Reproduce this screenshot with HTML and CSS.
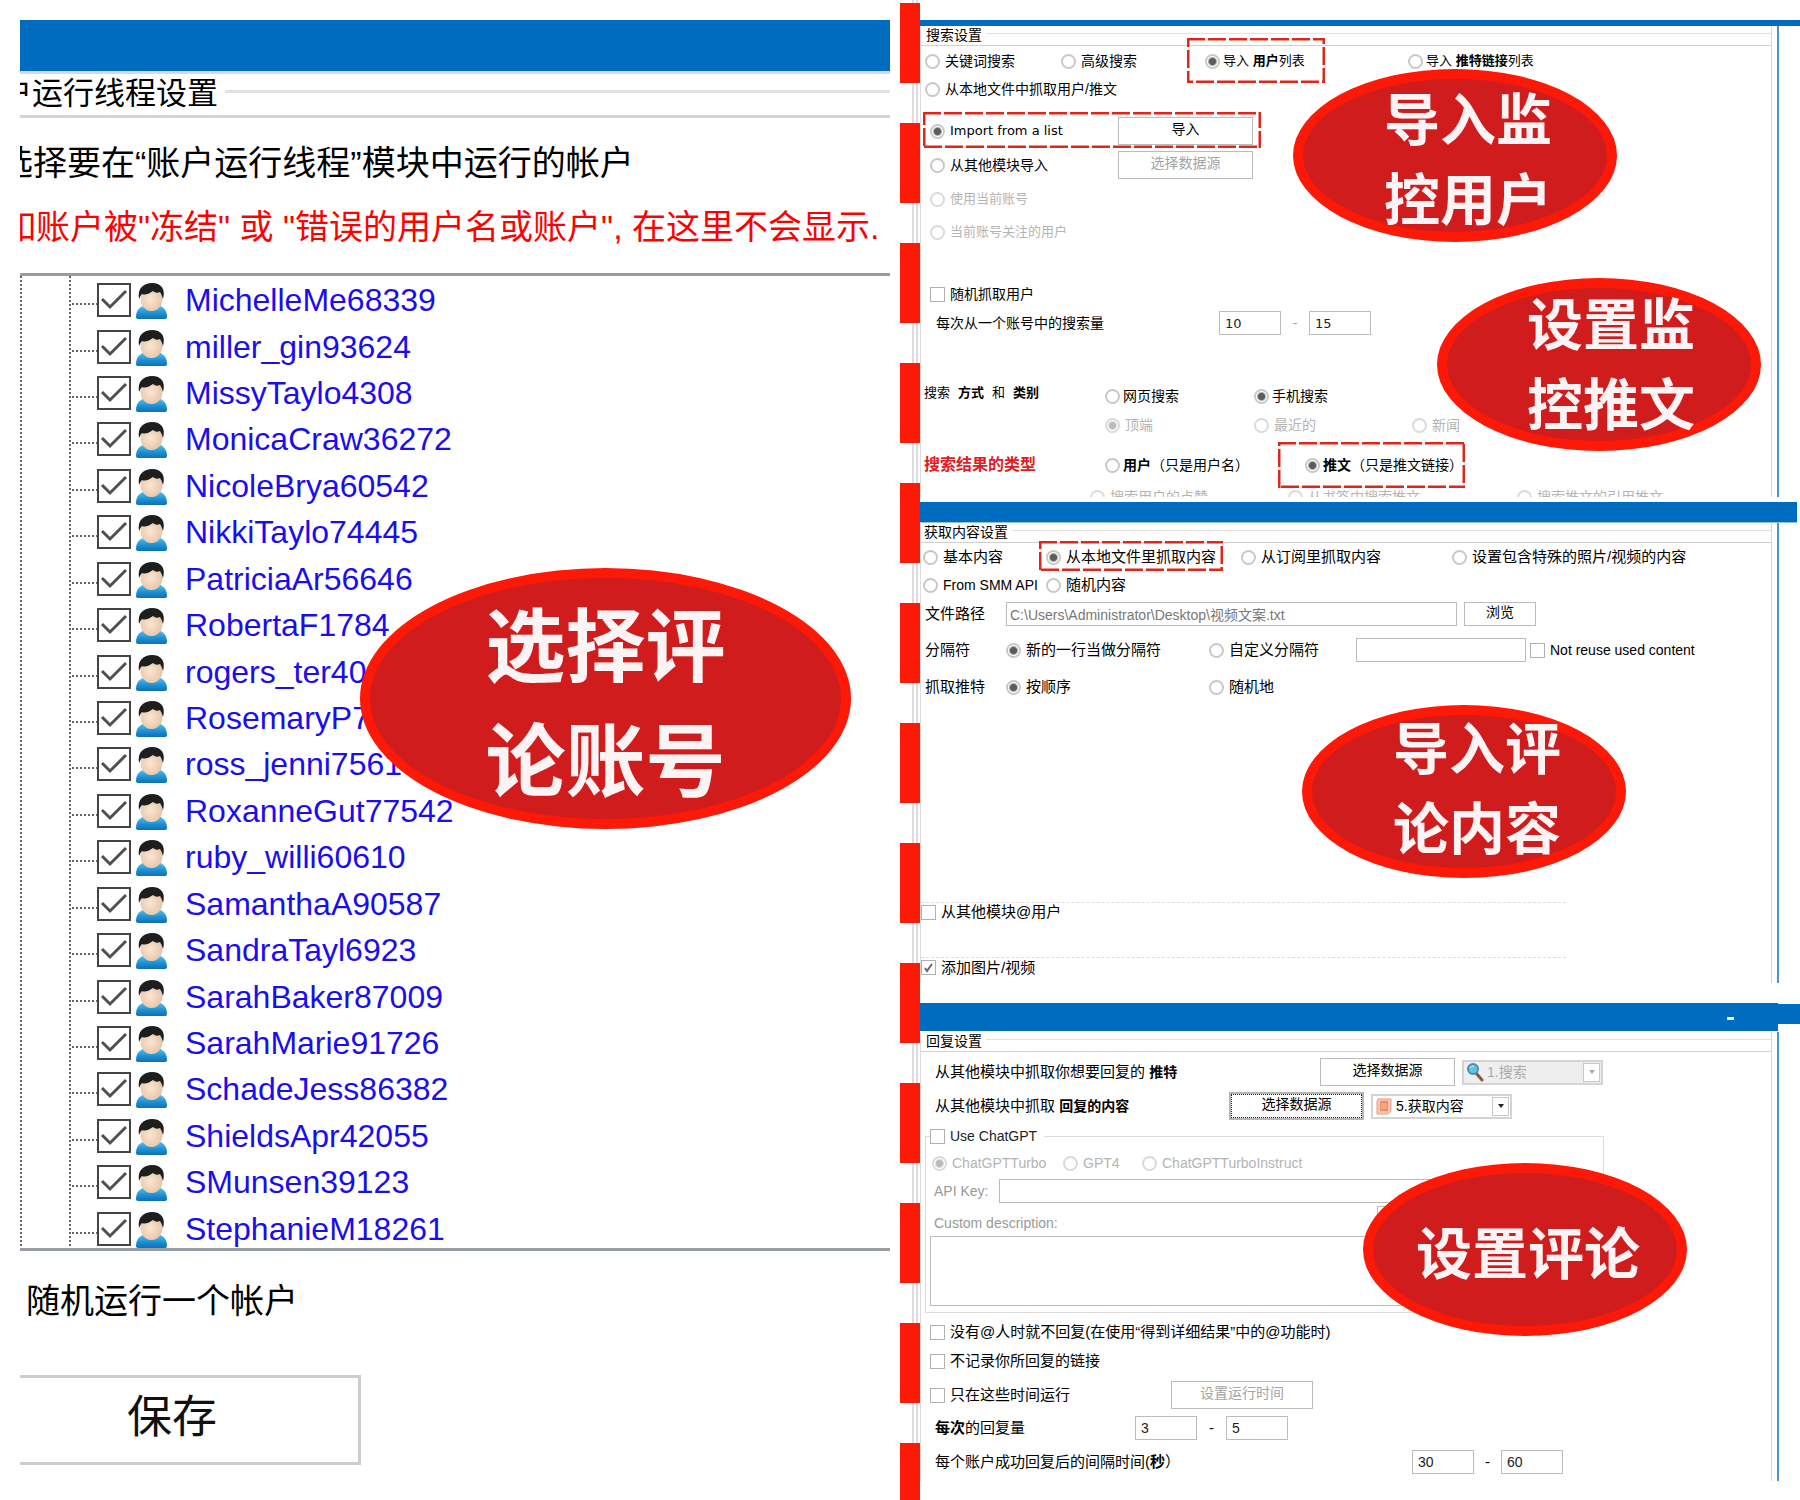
FILE: index.html
```html
<!DOCTYPE html>
<html lang="zh-CN">
<head>
<meta charset="utf-8">
<title>监控评论设置</title>
<link rel="stylesheet" href="styles.css">
</head>
<body>
<svg class="defs" aria-hidden="true">
  <defs>
    <linearGradient id="shirt" x1="0" y1="0" x2="0" y2="1"><stop offset="0" stop-color="#5cc3ea"/><stop offset=".6" stop-color="#1c8fd2"/><stop offset="1" stop-color="#0f6fb4"/></linearGradient>
    <radialGradient id="face" cx=".45" cy=".5" r=".6"><stop offset="0" stop-color="#fbe6d3"/><stop offset="1" stop-color="#e6c3a3"/></radialGradient>
    <symbol id="person" viewBox="0 0 31 36">
      <path d="M0 34C0 26 5 23 10 22H21C27 23 31 27 31 34Q31 36 28 36H3Q0 36 0 34Z" fill="url(#shirt)"/>
      <path d="M10 20H21V24Q15 32 10 24Z" fill="#f0d3b8"/>
      <ellipse cx="15.500" cy="16" rx="11" ry="12" fill="url(#face)"/>
      <path d="M3 16C1 5 8 0 16 0C25 0 30 6 27 16Q26 12 24 9Q20 11 17 8Q10 13 6 11Q4 13 3 16Z" fill="#1d1f1f"/>
    </symbol>
  </defs>
</svg>
<main class="board">
  <section class="accounts">
    <div class="accounts-bar"></div>
    <h2 class="accounts-title">户运行线程设置</h2>
    <p class="hint">选择要在“账户运行线程”模块中运行的帐户</p>
    <p class="hint warn">如账户被"冻结" 或 "错误的用户名或账户", 在这里不会显示.</p>
    <div class="tree">
      <ul>
        <li><i></i><label><input type="checkbox" checked><svg><use href="#person"/></svg>MichelleMe68339</label></li>
        <li><i></i><label><input type="checkbox" checked><svg><use href="#person"/></svg>miller_gin93624</label></li>
        <li><i></i><label><input type="checkbox" checked><svg><use href="#person"/></svg>MissyTaylo4308</label></li>
        <li><i></i><label><input type="checkbox" checked><svg><use href="#person"/></svg>MonicaCraw36272</label></li>
        <li><i></i><label><input type="checkbox" checked><svg><use href="#person"/></svg>NicoleBrya60542</label></li>
        <li><i></i><label><input type="checkbox" checked><svg><use href="#person"/></svg>NikkiTaylo74445</label></li>
        <li><i></i><label><input type="checkbox" checked><svg><use href="#person"/></svg>PatriciaAr56646</label></li>
        <li><i></i><label><input type="checkbox" checked><svg><use href="#person"/></svg>RobertaF1784</label></li>
        <li><i></i><label><input type="checkbox" checked><svg><use href="#person"/></svg>rogers_ter40</label></li>
        <li><i></i><label><input type="checkbox" checked><svg><use href="#person"/></svg>RosemaryP7</label></li>
        <li><i></i><label><input type="checkbox" checked><svg><use href="#person"/></svg>ross_jenni7561</label></li>
        <li><i></i><label><input type="checkbox" checked><svg><use href="#person"/></svg>RoxanneGut77542</label></li>
        <li><i></i><label><input type="checkbox" checked><svg><use href="#person"/></svg>ruby_willi60610</label></li>
        <li><i></i><label><input type="checkbox" checked><svg><use href="#person"/></svg>SamanthaA90587</label></li>
        <li><i></i><label><input type="checkbox" checked><svg><use href="#person"/></svg>SandraTayl6923</label></li>
        <li><i></i><label><input type="checkbox" checked><svg><use href="#person"/></svg>SarahBaker87009</label></li>
        <li><i></i><label><input type="checkbox" checked><svg><use href="#person"/></svg>SarahMarie91726</label></li>
        <li><i></i><label><input type="checkbox" checked><svg><use href="#person"/></svg>SchadeJess86382</label></li>
        <li><i></i><label><input type="checkbox" checked><svg><use href="#person"/></svg>ShieldsApr42055</label></li>
        <li><i></i><label><input type="checkbox" checked><svg><use href="#person"/></svg>SMunsen39123</label></li>
        <li><i></i><label><input type="checkbox" checked><svg><use href="#person"/></svg>StephanieM18261</label></li>
      </ul>
    </div>
    <p class="random-one">随机运行一个帐户</p>
    <button class="save" type="button">保存</button>
    <div class="callout callout-large">选择评<br>论账号</div>
  </section>

  <div class="divider"></div>

  <div class="settings">
    <section class="panel search">
      <div class="bar"></div>
      <form class="body">
        <h3 class="legend">搜索设置</h3>
        <div class="row s-source">
          <label class="opt"><input type="radio" name="src">关键词搜索</label>
          <label class="opt"><input type="radio" name="src">高级搜索</label>
          <label class="opt tight small"><input type="radio" name="src" checked><span>导入 <b>用户</b>列表</span></label>
          <label class="opt tight small"><input type="radio" name="src"><span>导入 <b>推特链接</b>列表</span></label>
        </div>
        <div class="row s-local"><label class="opt"><input type="radio" name="src">从本地文件中抓取用户/推文</label></div>
        <div class="row s-import s-first">
          <label class="opt latin"><input type="radio" name="from" checked>Import from a list</label>
          <button type="button">导入</button>
        </div>
        <div class="row s-import">
          <label class="opt"><input type="radio" name="from">从其他模块导入</label>
          <button type="button" disabled>选择数据源</button>
        </div>
        <div class="row s-import"><label class="opt off"><input type="radio" name="from" disabled>使用当前账号</label></div>
        <div class="row s-import s-last"><label class="opt off"><input type="radio" name="from" disabled>当前账号关注的用户</label></div>
        <div class="row s-random"><label class="opt"><input type="checkbox">随机抓取用户</label></div>
        <div class="row s-amount">
          <label for="amin">每次从一个账号中的搜索量</label>
          <input class="latin" id="amin" type="text" value="10"><span class="dash pale">-</span><input class="latin" type="text" value="15" aria-label="最大搜索量">
        </div>
        <div class="row s-mode">
          <span class="mode-title"><span>搜索</span><b>方式</b><span>和</span><b>类别</b></span>
          <label class="opt tight"><input type="radio" name="mode">网页搜索</label>
          <label class="opt tight"><input type="radio" name="mode" checked>手机搜索</label>
        </div>
        <div class="row s-mode s-kind">
          <span></span>
          <label class="opt off"><input type="radio" name="kind" checked disabled>顶端</label>
          <label class="opt off"><input type="radio" name="kind" disabled>最近的</label>
          <label class="opt off"><input type="radio" name="kind" disabled>新闻</label>
        </div>
        <div class="row s-result">
          <b class="result-title">搜索结果的类型</b>
          <label class="opt tight"><input type="radio" name="res"><span><b>用户</b>（只是用户名）</span></label>
          <label class="opt tight"><input type="radio" name="res" checked><span><b>推文</b>（只是推文链接）</span></label>
        </div>
        <div class="row s-cut">
          <label class="opt off"><input type="radio" name="res" disabled>搜索用户的点赞</label>
          <label class="opt off"><input type="radio" name="res" disabled>从书签中搜索推文</label>
          <label class="opt off"><input type="radio" name="res" disabled>搜索推文的引用推文</label>
        </div>
      </form>
      <svg class="mark mark-users"><rect width="100%" height="100%"/></svg>
      <svg class="mark mark-list"><rect width="100%" height="100%"/></svg>
      <svg class="mark mark-tweets"><rect width="100%" height="100%"/></svg>
      <div class="callout c-users">导入监<br>控用户</div>
      <div class="callout c-tweets">设置监<br>控推文</div>
    </section>

    <section class="panel fetch">
      <div class="bar"></div>
      <form class="body">
        <h3 class="legend">获取内容设置</h3>
        <div class="row f-source">
          <label class="opt"><input type="radio" name="c">基本内容</label>
          <label class="opt"><input type="radio" name="c" checked>从本地文件里抓取内容</label>
          <label class="opt"><input type="radio" name="c">从订阅里抓取内容</label>
          <label class="opt"><input type="radio" name="c">设置包含特殊的照片/视频的内容</label>
        </div>
        <div class="row f-source">
          <label class="opt en"><input type="radio" name="c">From SMM API</label>
          <label class="opt"><input type="radio" name="c">随机内容</label>
        </div>
        <div class="row f-path">
          <label for="path">文件路径</label>
          <input id="path" class="path" type="text" value="C:\Users\Administrator\Desktop\视频文案.txt">
          <button type="button">浏览</button>
        </div>
        <div class="row f-split">
          <span>分隔符</span>
          <label class="opt"><input type="radio" name="sep" checked>新的一行当做分隔符</label>
          <label class="opt"><input type="radio" name="sep">自定义分隔符</label>
          <input type="text" aria-label="自定义分隔符">
          <label class="opt en"><input type="checkbox">Not reuse used content</label>
        </div>
        <div class="row f-split">
          <span>抓取推特</span>
          <label class="opt"><input type="radio" name="ord" checked>按顺序</label>
          <label class="opt"><input type="radio" name="ord">随机地</label>
        </div>
        <div class="row f-extra f-at"><label class="opt"><input type="checkbox">从其他模块@用户</label></div>
        <div class="row f-extra f-media"><label class="opt"><input type="checkbox" checked>添加图片/视频</label></div>
      </form>
      <svg class="mark mark-file"><rect width="100%" height="100%"/></svg>
      <div class="callout c-content">导入评<br>论内容</div>
    </section>

    <section class="panel reply">
      <div class="bar"><span class="minimize"></span></div>
      <form class="body">
        <h3 class="legend">回复设置</h3>
        <div class="row r-tweet">
          <span>从其他模块中抓取你想要回复的 <b>推特</b></span>
          <button type="button">选择数据源</button>
          <div class="combo combo-off">
            <svg viewBox="0 0 18 20"><path d="M10 11L16 18" stroke="#8a5a3c" stroke-width="3" stroke-linecap="round"/><circle cx="7" cy="7" r="5" fill="#5cc4e4" stroke="#4a8fae" stroke-width="2"/><path d="M4 6Q5 4 8 4" stroke="#d8f4fb" stroke-width="1" fill="none"/></svg>
            <select disabled aria-label="推特来源"><option>1.搜索</option></select>
            <span class="arrow"></span>
          </div>
        </div>
        <div class="row r-content">
          <span>从其他模块中抓取 <b>回复的内容</b></span>
          <button class="focused" type="button">选择数据源</button>
          <div class="combo">
            <svg viewBox="0 0 18 20"><path d="M3 3H16V15L13 18H2V5Z" fill="#f7c7b2" stroke="#ef9a7c"/><path d="M5 5H13V15H5Z" fill="#f08a66"/><path d="M7 7V13M9 7V13M11 7V13" stroke="#f7c0aa"/></svg>
            <select aria-label="内容来源"><option>5.获取内容</option></select>
            <span class="arrow"></span>
          </div>
        </div>
        <div class="gpt">
          <label class="opt en gpt-use"><input type="checkbox">Use ChatGPT</label>
          <div class="row g-models">
            <label class="opt en off"><input type="radio" name="m" checked disabled>ChatGPTTurbo</label>
            <label class="opt en off"><input type="radio" name="m" disabled>GPT4</label>
            <label class="opt en off"><input type="radio" name="m" disabled>ChatGPTTurboInstruct</label>
          </div>
          <div class="row g-key"><label class="en" for="key">API Key:</label><input id="key" type="text"></div>
          <div class="row g-desc"><label class="en" for="desc">Custom description:</label><button type="button" aria-label="插入"></button></div>
          <textarea id="desc"></textarea>
        </div>
        <div class="row r-check r-noat"><label class="opt"><input type="checkbox">没有@人时就不回复(在使用“得到详细结果”中的@功能时)</label></div>
        <div class="row r-check"><label class="opt"><input type="checkbox">不记录你所回复的链接</label></div>
        <div class="row r-check r-time">
          <label class="opt"><input type="checkbox">只在这些时间运行</label>
          <button type="button" disabled>设置运行时间</button>
        </div>
        <div class="row r-amount">
          <label for="rmin"><b>每次</b>的回复量</label>
          <input id="rmin" type="text" value="3"><span class="dash">-</span><input type="text" value="5" aria-label="最大回复量">
        </div>
        <div class="row r-delay">
          <label for="dmin">每个账户成功回复后的间隔时间(<b>秒</b>）</label>
          <input id="dmin" type="text" value="30"><span class="dash">-</span><input type="text" value="60" aria-label="最大间隔">
        </div>
      </form>
      <div class="callout c-reply">设置评论</div>
    </section>
  </div>
</main>
</body>
</html>
```
FILE: styles.css
```css
* { box-sizing: border-box; }
body {
  margin: 0;
  background: #fff;
  color: #000;
  font: 15px/18px "Liberation Sans", "Noto Sans CJK SC", sans-serif;
}
h2, h3, p, ul { margin: 0; padding: 0; font-weight: 400; }
.defs { position: absolute; width: 0; height: 0; }

.board {
  display: grid;
  grid-template-columns: minmax(0, 870fr) 30px minmax(0, 880fr);
  min-height: 100vh;
  padding-left: 20px;
}

/* accounts column */
.accounts { position: relative; padding: 20px 0; white-space: nowrap; }
.accounts-bar { height: 54px; background: #006cbf; border-bottom: 3px solid #d6dade; }
.accounts-title {
  display: flex;
  align-items: center;
  height: 44px;
  padding-bottom: 2px;
  overflow: hidden;
  border-bottom: 3px solid #d4d4d4;
  font-size: 31px;
  line-height: 36px;
  text-indent: -19px;
}
.accounts-title::after { content: ""; flex: 1; height: 3px; margin: 0 0 4px 7px; background: #e2e2e2; }
.hint {
  margin-top: 26px;
  overflow: hidden;
  font-size: 34px;
  line-height: 38px;
  text-indent: -21px;
}
.hint.warn { margin-top: 26px; color: #f00; text-indent: -18px; }
.tree {
  height: 978px;
  margin-top: 27px;
  overflow: hidden;
  border: solid #989da4;
  border-width: 3px 0;
}
.tree ul {
  display: grid;
  grid-template-rows: repeat(21, 1fr);
  height: 976px;
  padding-top: 1px;
  list-style: none;
  background:
    repeating-linear-gradient(#666 0 2px, transparent 2px 4px) 0 0 / 2px 100% no-repeat,
    repeating-linear-gradient(#666 0 2px, transparent 2px 4px) 49px 0 / 2px 100% no-repeat;
}
.tree li { display: flex; align-items: center; padding-left: 52px; }
.tree i { width: 25px; height: 2px; margin-top: 8px; background: repeating-linear-gradient(90deg, #666 0 2px, transparent 2px 4px); }
.tree label { display: flex; align-items: center; color: #1a0df0; font-size: 32px; line-height: 38px; }
.tree input {
  appearance: none;
  width: 34px;
  height: 34px;
  margin: 0 5px 0 0;
  border: 2px solid #444;
  background: url("data:image/svg+xml,%3Csvg xmlns='http://www.w3.org/2000/svg' viewBox='0 0 30 30'%3E%3Cpath d='M3 14L11 22L27 6' fill='none' stroke='%23505050' stroke-width='3'/%3E%3C/svg%3E");
}
.tree svg { width: 31px; height: 36px; margin: 2px 18px 0 0; }
.random-one { margin: 32px 0 0 6px; font-size: 34px; line-height: 36px; }
.save {
  display: block;
  width: 341px;
  height: 90px;
  margin-top: 56px;
  padding: 0 34px 12px 0;
  border: 3px solid #ccc;
  border-left: 0;
  background: #fff;
  color: #111;
  font: 45px/50px "Noto Sans CJK SC", sans-serif;
}

.divider {
  margin-left: 10px;
  background:
    repeating-linear-gradient(#fc1908 0 80px, transparent 80px 120px) 0 3px no-repeat,
    linear-gradient(90deg, transparent 12px, #ddd 12px 14px, transparent 14px 16px, #ddd 16px 18px, transparent 18px);
}

/* setting panels */
.settings { padding: 20px 0; white-space: nowrap; }
.panel { position: relative; }
.bar { background: #006cbf; }
.body {
  margin-right: 21px;
  border: solid #ddd;
  border-width: 0 2px 0 1px;
  border-right-color: #4a93d2;
  background: linear-gradient(#d5d5d5, #d5d5d5) right 5px top / 1px 100% no-repeat;
}
.legend {
  display: flex;
  align-items: center;
  height: 20px;
  margin-right: 6px;
  padding: 0 0 2px 5px;
  border-bottom: 1px solid #d0d0d0;
  font-size: 14px;
}
.legend::after { content: ""; flex: 1; height: 1px; margin: 0 0 2px 4px; background: #e0e0e0; }
.row { display: grid; align-items: center; }
.opt { display: flex; align-items: center; gap: 5px; }
.tight { gap: 3px; }
.small { font-size: 13px; }
.off { color: #b4b4b4; }
.latin { font-family: "DejaVu Sans", sans-serif; font-size: 13px; }
.en { font-size: 14px; }
.opt input { appearance: none; flex: none; width: 15px; height: 15px; margin: 0; border: 1px solid #b0b0b0; background: #fff; }
.opt input[type="radio"] { border: 2px solid #c8c8c8; border-radius: 50%; }
.opt input[type="radio"]:checked { background: radial-gradient(circle, #5c5c5c 3px, #fff 5px); }
.opt input:disabled { border-color: #dadada; }
.opt input[type="radio"]:checked:disabled { background: radial-gradient(circle, #bbb 3px, #fff 5px); }
.opt input[type="checkbox"]:checked { background: url("data:image/svg+xml,%3Csvg xmlns='http://www.w3.org/2000/svg' viewBox='0 0 13 13'%3E%3Cpath d='M3 7L5 10L10 3' fill='none' stroke='%23666' stroke-width='2'/%3E%3C/svg%3E"); }
.row > input, textarea {
  width: 100%;
  height: 24px;
  margin: 0;
  padding: 0 5px;
  border: 1px solid #bcbcbc;
  background: #fff;
  color: #222;
  font-size: 14px;
  font-family: inherit;
}
.row > input.latin { font: 13px "DejaVu Sans", sans-serif; }
.row > input.path { padding: 0 3px; color: #777; }
.row > button {
  height: 28px;
  padding: 0 0 4px;
  border: 1px solid #bcbcbc;
  background: #fff;
  color: #000;
  font: 14px/18px "Liberation Sans", "Noto Sans CJK SC", sans-serif;
}
.row > button:disabled { color: #a4a4a4; }
.dash { text-align: center; }
.pale { color: #aaa; }

/* search panel */
.search .bar { height: 6px; }
.search { font-size: 14px; }
.s-source { grid-template-columns: 136px 144px 203px 1fr; height: 30px; padding-left: 4px; }
.s-local { height: 26px; padding-left: 4px; }
.s-import { grid-template-columns: 188px 135px; height: 34px; padding-left: 9px; }
.s-import .off { font-size: 13px; }
.s-first { margin-top: 12px; }
.s-last { height: 32px; }
.s-random { height: 28px; margin-top: 32px; padding-left: 9px; }
.s-amount { grid-template-columns: 283px 62px 28px 62px; height: 30px; padding-left: 15px; }
.s-mode { grid-template-columns: 181px 149px 158px 1fr; height: 28px; margin-top: 44px; padding-left: 3px; }
.mode-title { display: flex; gap: 8px; padding-bottom: 6px; font-size: 13px; }
.s-kind { height: 30px; margin-top: 0; }
.s-result { grid-template-columns: 181px 200px 1fr; height: 34px; margin-top: 8px; padding-left: 3px; }
.result-title { color: #e01b24; font-size: 16px; }
.s-cut { grid-template-columns: 198px 229px 1fr; align-items: start; height: 9px; margin-top: 6px; padding-left: 169px; overflow: hidden; }

/* content panel */
.fetch { margin-top: 5px; }
.fetch .bar { height: 21px; margin-right: 3px; border-bottom: 1px solid #8fc0e6; }
.fetch .legend { padding-left: 3px; }
.f-source { grid-template-columns: 123px 195px 211px 1fr; height: 28px; padding-left: 2px; }
.f-path { grid-template-columns: 81px 451px 7px 72px; height: 30px; padding-left: 4px; }
.f-path button { grid-column: 4; height: 24px; }
.f-split { grid-template-columns: 81px 203px 147px 170px 1fr; height: 32px; margin-top: 5px; padding-left: 4px; }
.f-split .en { padding-left: 4px; }
.f-extra { max-width: 645px; border-top: 1px dashed #ddd; }
.f-at { height: 18px; margin-top: 199px; }
.f-media { height: 26px; margin-top: 37px; padding-bottom: 6px; }

/* reply panel */
.reply { margin-top: 20px; }
.reply .bar {
  display: flex;
  justify-content: flex-end;
  height: 29px;
  padding: 14px 66px 0 0;
  background:
    linear-gradient(#006cbf, #006cbf) 0 0 / calc(100% - 22px) 28px no-repeat,
    linear-gradient(#006cbf, #006cbf) 0 1px / 100% 20px no-repeat;
}
.minimize { width: 7px; height: 3px; background: #fff; }
.reply .body { padding-bottom: 4px; }
.r-tweet, .r-content { grid-template-columns: 385px 135px 7px 141px; height: 30px; margin-top: 5px; padding-left: 14px; }
.r-content { grid-template-columns: 294px 135px 7px 141px; margin-top: 4px; }
.r-tweet b, .r-content b { font-size: 14px; }
.row > button.focused { border: 2px solid #b4b4b4; outline: 1px dotted #222; outline-offset: -3px; }
.combo { grid-column: 4; display: flex; align-items: center; height: 25px; padding: 0 1px; border: 2px solid #d4d4d4; }
.combo svg { width: 18px; height: 20px; margin: 0 3px 0 1px; }
.combo select { appearance: none; flex: 1; min-width: 0; padding: 0; border: 0; background: none; color: #000; font: 14px/18px "Liberation Sans", "Noto Sans CJK SC", sans-serif; opacity: 1; }
.combo-off { background: #eee; }
.combo-off select { color: #aaa; }
.arrow { display: grid; place-items: center; width: 17px; height: 19px; border: 1px solid #c8c8c8; background: #fff; }
.arrow::after { content: ""; border: solid transparent; border-width: 4px 3px 0; border-top-color: #222; }
.combo-off .arrow::after { border-top-color: #aaa; }
.gpt { max-width: 679px; margin: 15px 0 0 4px; padding: 0 6px 6px 4px; border: 1px solid #ddd; color: #999; }
.gpt-use { width: 114px; height: 18px; margin-top: -10px; background: #fff; color: #222; }
.g-models { grid-template-columns: 131px 79px 1fr; height: 20px; margin-top: 8px; padding-left: 2px; }
.g-key { grid-template-columns: 65px 1fr; margin-top: 6px; padding-left: 4px; }
.g-desc { grid-template-columns: 443px 1fr; align-items: end; margin-top: 3px; padding-left: 4px; }
.g-desc button { height: 26px; }
textarea { display: block; height: 70px; margin-top: 4px; resize: none; }
.r-check { height: 30px; padding-left: 9px; }
.r-noat { height: 28px; margin-top: 5px; }
.r-time { grid-template-columns: 241px 142px; margin-top: 4px; }
.r-amount { grid-template-columns: 200px 62px 29px 62px; height: 30px; margin-top: 3px; padding-left: 14px; }
.r-delay { grid-template-columns: 477px 62px 27px 62px; height: 30px; margin-top: 4px; padding-left: 14px; }

/* annotations laid over the panels */
.mark { position: absolute; pointer-events: none; }
.mark rect { fill: none; stroke: #e0261a; stroke-width: 5; stroke-dasharray: 18 3; }
.mark-users { left: 267px; top: 18px; width: 138px; height: 45px; }
.mark-list { left: 3px; top: 92px; width: 338px; height: 36px; }
.mark-tweets { left: 358px; top: 422px; width: 187px; height: 46px; }
.mark-file { left: 119px; top: 39px; width: 184px; height: 30px; }
.callout {
  position: absolute;
  z-index: 1;
  display: flex;
  align-items: center;
  justify-content: center;
  width: 324px;
  height: 173px;
  padding-left: 26px;
  border: 10px solid #fc1908;
  border-radius: 50%;
  background: #d01c1c;
  color: #fcf4f4;
  font: 700 56px/80px "Noto Sans CJK SC", sans-serif;
}
.callout-large { left: 340px; top: 568px; width: 491px; height: 261px; padding: 0 0 2px; font-size: 80px; line-height: 115px; }
.c-users { left: 373px; top: 49px; }
.c-tweets { left: 517px; top: 258px; padding: 0 0 8px 24px; }
.c-content { left: 382px; top: 203px; padding-bottom: 14px; }
.c-reply { left: 443px; top: 160px; padding: 0 0 0 6px; }
```
